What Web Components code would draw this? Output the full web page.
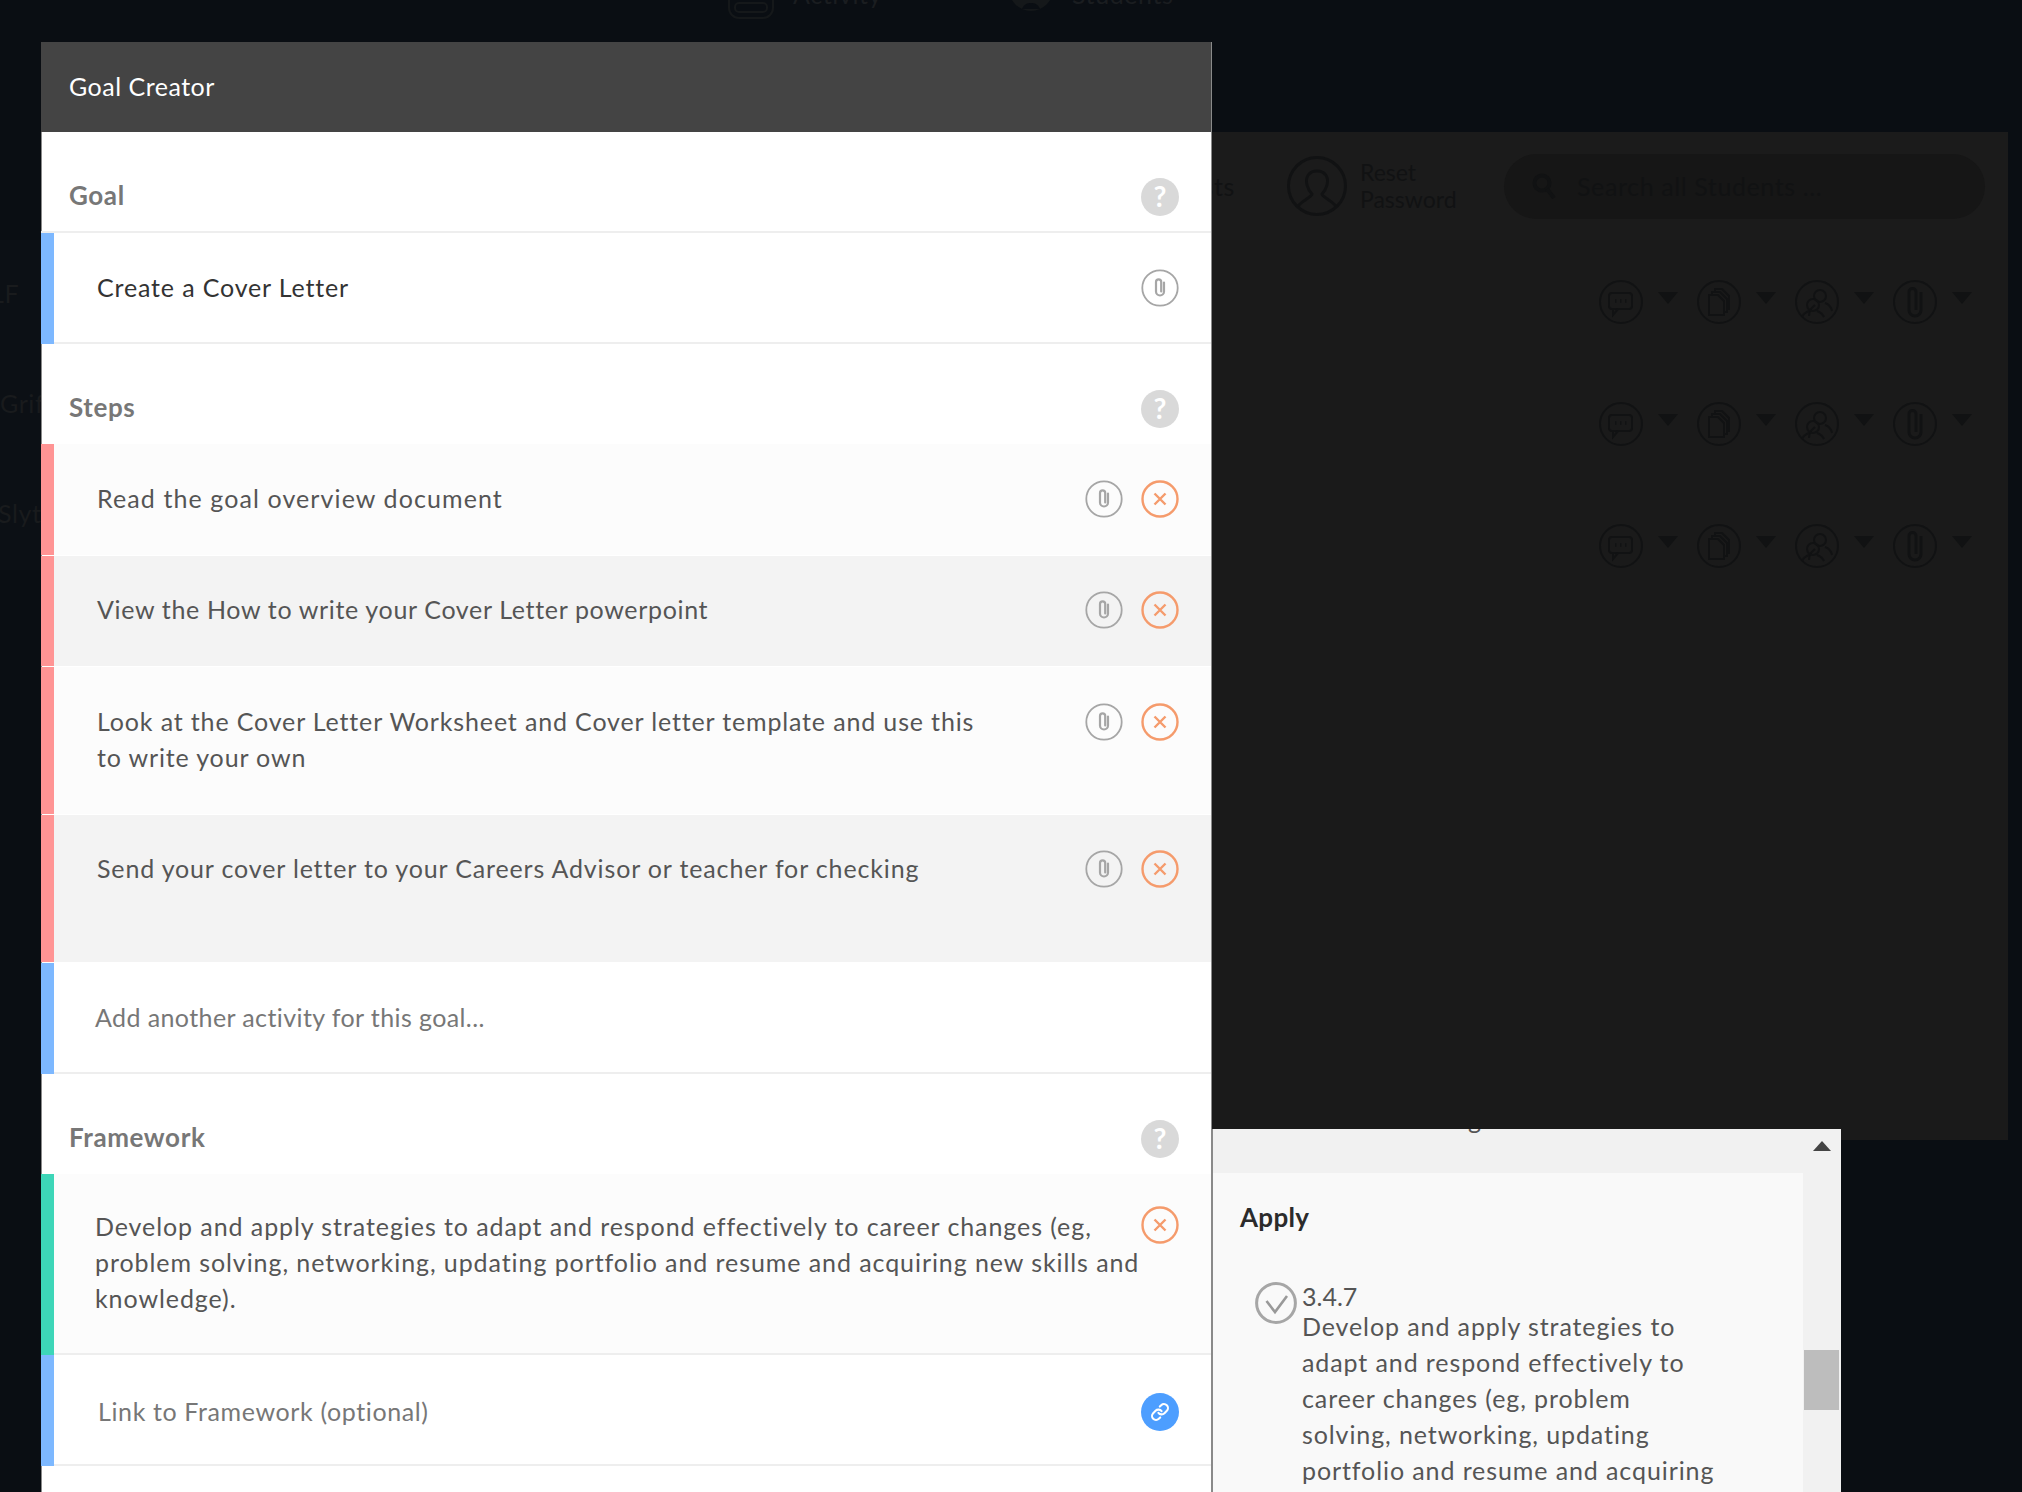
<!DOCTYPE html>
<html lang="en">
<head>
<meta charset="utf-8">
<title>Goal Creator</title>
<style>
  html, body { margin: 0; height: 100%; }
  body { position: relative; width: 2022px; height: 1492px; overflow: hidden; background: #0a0e13; font-family: Lato, "Open Sans", sans-serif; }
</style>
</head>
<body>
<page-backdrop></page-backdrop>

<goal-modal heading="Goal Creator">
  <modal-section label="Goal" ruled></modal-section>
  <goal-row bar="#7db8ff" tone="white" ink="#333" clip ruled>Create a Cover Letter</goal-row>
  <modal-section label="Steps"></modal-section>
  <goal-row bar="#ff9494" tone="light" clip remove track="1.1px">Read the goal overview document</goal-row>
  <goal-row bar="#ff9494" tone="grey" clip remove track=".66px">View the How to write your Cover Letter powerpoint</goal-row>
  <goal-row bar="#ff9494" tone="light" clip remove lines="2">Look at the Cover Letter Worksheet and Cover letter template and use this<br>to write your own</goal-row>
  <goal-row bar="#ff9494" tone="grey" clip remove lines="2" extra="1px">Send your cover letter to your Careers Advisor or teacher for checking</goal-row>
  <goal-row bar="#7db8ff" tone="white" ink="#777" ruled inset="95px" track=".4px" pad="36px">Add another activity for this goal...</goal-row>
  <modal-section label="Framework"></modal-section>
  <goal-row bar="#3dd6b8" tone="light" remove ruled inset="95px" wide track=".92px" pad="34px">Develop and apply strategies to adapt and respond effectively to career changes (eg,<br>problem solving, networking, updating portfolio and resume and acquiring new skills and<br>knowledge).</goal-row>
  <goal-row bar="#7db8ff" tone="white" ink="#777" link ruled inset="98px" track=".62px" pad="38px">Link to Framework (optional)</goal-row>
</goal-modal>

<framework-popup></framework-popup>

<script>
const DIM = '#111213';

// every round button in the modal is one of these
const ROUND_ICONS = {
  help: `<circle cx="19" cy="19" r="19" fill="#d9d9d9"/>
    <text x="19" y="29" text-anchor="middle" font-family="Lato, sans-serif" font-size="28" font-weight="700" fill="#fff">?</text>`,
  clip: `<circle cx="19" cy="19" r="17.7" fill="none" stroke="#a6a6a6" stroke-width="1.8"/>
    <path d="M23 13.5V22.5a4 4 0 0 1-8 0V13a2.6 2.6 0 0 1 5.2 0V22.5" fill="none" stroke="#a6a6a6" stroke-width="2.2" stroke-linecap="round"/>`,
  remove: `<circle cx="19" cy="19" r="17.5" fill="none" stroke="#f59b6c" stroke-width="2.4"/>
    <path d="M13.5 13.5l11 11M24.5 13.5l-11 11" fill="none" stroke="#f59b6c" stroke-width="2.4"/>`,
  link: `<circle cx="19" cy="19" r="19" fill="#4d9eff"/>
    <g transform="translate(9.4 9.4) scale(.8)" fill="none" stroke="#fff" stroke-width="2.6" stroke-linecap="round" stroke-linejoin="round">
      <path d="M10 13a5 5 0 0 0 7.54.54l3-3a5 5 0 0 0-7.07-7.07l-1.72 1.71"/>
      <path d="M14 11a5 5 0 0 0-7.54-.54l-3 3a5 5 0 0 0 7.07 7.07l1.71-1.71"/>
    </g>`,
  check: `<circle cx="21" cy="21" r="19.4" fill="none" stroke="#a6a6a6" stroke-width="3"/>
    <path d="M11.5 19L20 30l12-16" fill="none" stroke="#999" stroke-width="2.6"/>`
};

class RoundIcon extends HTMLElement {
  constructor() {
    super();
    this.attachShadow({ mode: 'open' });
    const type = this.getAttribute('type') || 'clip';
    const size = type === 'check' ? 42 : 38;
    this.shadowRoot.innerHTML = `
      <style>
        :host { display: block; width: ${size}px; height: ${size}px; flex: none; }
        svg { display: block; }
      </style>
      <svg width="${size}" height="${size}" viewBox="0 0 ${size} ${size}">${ROUND_ICONS[type]}</svg>`;
  }
}

class GoalModal extends HTMLElement {
  constructor() {
    super();
    this.attachShadow({ mode: 'open' });
    this.shadowRoot.innerHTML = `
      <style>
        :host {
          position: absolute; left: 41px; top: 42px; bottom: 0; width: 1171px;
          display: flex; flex-direction: column; box-sizing: border-box;
          background: #fff; border-right: 1px solid #8a8a8a; box-shadow: inset 1px 0 0 #8a8a8a;
          overflow: hidden;
        }
        header {
          height: 90px; flex: none; display: flex; align-items: center; padding: 0 0 2px 28px; box-sizing: border-box;
          background: #444; color: #fff; font-size: 25px; letter-spacing: .5px;
        }
      </style>
      <header>${this.getAttribute('heading')}</header>
      <slot></slot>`;
  }
}

class ModalSection extends HTMLElement {
  constructor() {
    super();
    this.attachShadow({ mode: 'open' });
    const ruled = this.hasAttribute('ruled');
    this.shadowRoot.innerHTML = `
      <style>
        :host {
          display: flex; align-items: center; justify-content: space-between; flex: none;
          box-sizing: border-box; height: ${ruled ? 101 : 100}px; padding: 46px 32px ${ruled ? 15 : 16}px 28px;
          ${ruled ? 'border-bottom: 2px solid #eee;' : ''}
        }
        span { color: #777; font-size: 26px; font-weight: 700; letter-spacing: .6px; position: relative; top: -2px; }
      </style>
      <span>${this.getAttribute('label')}</span>
      <round-icon type="help"></round-icon>`;
  }
}

class GoalRow extends HTMLElement {
  constructor() {
    super();
    this.attachShadow({ mode: 'open' });
    const a = (n, d) => this.getAttribute(n) || d;
    const tones = { white: '#fff', light: '#fcfcfc', grey: '#f3f3f3' };
    const ruled = this.hasAttribute('ruled');
    const wide = this.hasAttribute('wide');
    const lines = +a('lines', 1);
    let icons = '';
    if (this.hasAttribute('clip')) icons += '<round-icon type="clip"></round-icon>';
    if (this.hasAttribute('remove')) icons += '<round-icon type="remove"></round-icon>';
    if (this.hasAttribute('link')) icons += '<round-icon type="link"></round-icon>';
    // single line rows come out 111.5px tall, the ruled ones 111px with their rule
    this.shadowRoot.innerHTML = `
      <style>
        :host {
          display: flex; flex: none; box-sizing: border-box; background: ${tones[a('tone', 'white')]};
          ${ruled ? 'border-bottom: 2px solid #eee;' : 'margin-bottom: 1px;'}
        }
        .bar { width: 13px; flex: none; background: ${a('bar', '#7db8ff')}; ${ruled ? 'margin-bottom: -2px;' : ''} }
        .text {
          flex: 1; min-width: 0; box-sizing: border-box;
          padding: ${a('pad', '35.5px')} 0 ${wide ? '37px' : '0'} calc(${a('inset', '97px')} - 54px);
          min-height: calc(36px * ${lines} + ${ruled ? 73 : 74.5}px + ${a('extra', '0px')});
          color: ${a('ink', '#555')}; font-size: 25px; line-height: 36px;
          letter-spacing: ${a('track', '.85px')}; white-space: nowrap;
        }
        .icons { flex: none; display: flex; gap: 18px; padding: ${a('pad', '35.5px')} 32px 0 0; }
        :host([wide]) .icons { padding-top: 32px; position: absolute; right: 0; }
      </style>
      <div class="bar"></div>
      <div class="text"><slot></slot></div>
      <div class="icons">${icons}</div>`;
  }
}

class FrameworkPopup extends HTMLElement {
  constructor() {
    super();
    this.attachShadow({ mode: 'open' });
    this.shadowRoot.innerHTML = `
      <style>
        :host {
          position: absolute; left: 1212px; top: 1129px; bottom: 0; width: 629px;
          display: flex; box-sizing: border-box; overflow: hidden;
          border-left: 1px solid #8a8a8a; background: #f1f1f1;
        }
        .scroll { flex: 1; min-width: 0; display: flex; flex-direction: column; }
        .above { height: 44px; flex: none; overflow: hidden; padding-left: 255px; color: #555; font-size: 25px; line-height: 36px; }
        .above span { display: block; margin-top: -28px; }
        .group { flex: 1; background: #f9f9f9; padding: 26px 0 0 27px; }
        h3 { margin: 0 0 47px; font-size: 26px; line-height: 36px; font-weight: 700; color: #2b2b2b; letter-spacing: .3px; }
        .item { display: flex; margin-left: 15px; gap: 5px; }
        .num { color: #555; font-size: 25px; line-height: 24px; padding-top: 2px; }
        .desc { color: #555; font-size: 25px; line-height: 36px; letter-spacing: .9px; white-space: nowrap; }
        .rail { width: 38px; flex: none; position: relative; background: #f1f1f1; }
        .arrow { margin: 12px auto 0; width: 0; height: 0; border: 9px solid transparent; border-top: 0; border-bottom: 10px solid #444; }
        .thumb { position: absolute; left: 1px; right: 2px; top: 221px; height: 60px; background: #bdbdbd; }
      </style>
      <div class="scroll">
        <div class="above"><span>g</span></div>
        <div class="group">
          <h3>Apply</h3>
          <div class="item">
            <round-icon type="check"></round-icon>
            <div>
              <div class="num">3.4.7</div>
              <div class="desc">Develop and apply strategies to<br>adapt and respond effectively to<br>career changes (eg, problem<br>solving, networking, updating<br>portfolio and resume and acquiring</div>
            </div>
          </div>
        </div>
      </div>
      <div class="rail"><div class="arrow"></div><div class="thumb"></div></div>`;
  }
}

// faint icons of the page that sits behind the overlay
const DIM_ICONS = {
  chat: `<rect x="10" y="13" width="23" height="16" rx="3"/><path d="M14 29v6l5-6"/><path d="M16 21h1.5M21 21h1.5M26 21h1.5" stroke-width="3.5"/>`,
  docs: `<path d="M12 15v20h15V21l-6-6zM15 15v-3h8l7 7v13h-3M18 12V9h7l7 7v13h-2"/>`,
  users: `<circle cx="25" cy="16" r="6"/><path d="M14 36c0-7 4-9 6-11M30 23c3 1 6 3 7 8"/><circle cx="18" cy="25" r="6"/><path d="M7 37c2-4 4-5 7-6M22 31c3 1 5 2 7 6"/>`,
  clip: `<path d="M28 12v18a6 6 0 0 1-12 0V12a3.5 3.5 0 0 1 7 0v18" stroke-width="3"/>`
};

class DimIcon extends HTMLElement {
  constructor() {
    super();
    this.attachShadow({ mode: 'open' });
    this.shadowRoot.innerHTML = `
      <style>
        :host { display: flex; align-items: flex-start; flex: none; gap: 15px; width: 98px; }
        svg { display: block; flex: none; }
        .tri { width: 0; height: 0; margin-top: 12px; border: 10px solid transparent; border-bottom: 0; border-top: 12px solid ${DIM}; }
      </style>
      <svg width="44" height="44" viewBox="0 0 44 44" fill="none" stroke="${DIM}" stroke-width="2">
        <circle cx="22" cy="22" r="21"/>${DIM_ICONS[this.getAttribute('type')]}
      </svg>
      <div class="tri"></div>`;
  }
}

class PageBackdrop extends HTMLElement {
  constructor() {
    super();
    this.attachShadow({ mode: 'open' });
    const row = `<div class="row"><dim-icon type="chat"></dim-icon><dim-icon type="docs"></dim-icon><dim-icon type="users"></dim-icon><dim-icon type="clip"></dim-icon></div>`;
    this.shadowRoot.innerHTML = `
      <style>
        :host { display: block; height: 1492px; color: #1a1d20; font-size: 25px; letter-spacing: .6px; overflow: hidden; }
        .top { height: 132px; display: flex; padding-left: 728px; box-sizing: border-box; }
        .top svg { display: block; margin-top: -41px; flex: none; }
        .top span { margin: -24px 0 0 19px; width: 216px; line-height: 36px; }
        .main { display: flex; }
        .names { width: 1211px; flex: none; padding-top: 108px; }
        .names div { height: 110px; box-sizing: border-box; background: #0c1015; padding-top: 35px; line-height: 36px; color: #191b1d; overflow: hidden; white-space: nowrap; }
        .panel { width: 797px; height: 1008px; background: #1a1a1a; flex: none; color: ${DIM}; }
        .band { height: 108px; display: flex; align-items: center; justify-content: flex-end; padding-right: 23px; box-sizing: border-box; background: #1b1b1b; }
        .band > * { flex: none; }
        .lists { margin-right: 52px; }
        .reset { line-height: 27px; margin: 0 48px 0 13px; width: 96px; font-size: 23px; letter-spacing: 0; white-space: normal; }
        .search { width: 481px; height: 65px; border-radius: 33px; background: #161616; display: flex; align-items: center; gap: 21px; padding-left: 28px; box-sizing: border-box; }
        .row { height: 122px; display: flex; padding: 40px 0 0 388px; box-sizing: border-box; }
      </style>
      <div class="top">
        <svg width="46" height="60" viewBox="0 0 46 60" fill="none" stroke="#15181a" stroke-width="2"><rect x="1" y="1" width="44" height="58" rx="10"/><rect x="7" y="44" width="32" height="9" rx="4"/></svg>
        <span>Activity</span>
        <svg width="44" height="60" viewBox="0 0 44 60" fill="#15181a"><circle cx="22" cy="30" r="22" fill="#15181a"/><path d="M13 50c2-5 5-6 9-6s7 1 9 6z" fill="#0a0e13"/></svg>
        <span>Students</span>
      </div>
      <div class="main">
        <div class="names">
          <div style="margin-left:-24px">ELF</div>
          <div>Griffin</div>
          <div style="margin-left:-2px">Slytherin</div>
        </div>
        <div class="panel">
          <div class="band">
            <span class="lists">Lists</span>
            <svg width="60" height="62" viewBox="0 0 60 62" fill="none" stroke="${DIM}" stroke-width="3"><circle cx="30" cy="31" r="28.5"/><path d="M30 16c-8 0-12 6-10 14 1 4 3 7 5 9 0 3-8 5-14 12M30 16c8 0 12 6 10 14-1 4-3 7-5 9 0 3 8 5 14 12"/></svg>
            <span class="reset">Reset Password</span>
            <div class="search">
              <svg width="24" height="26" viewBox="0 0 24 26" fill="none" stroke="${DIM}" stroke-width="4"><circle cx="10" cy="10" r="7.5"/><path d="M15 16l7 9"/></svg>
              <span>Search all Students ...</span>
            </div>
          </div>
          ${row}${row}${row}
        </div>
      </div>`;
  }
}

customElements.define('round-icon', RoundIcon);
customElements.define('goal-modal', GoalModal);
customElements.define('modal-section', ModalSection);
customElements.define('goal-row', GoalRow);
customElements.define('framework-popup', FrameworkPopup);
customElements.define('dim-icon', DimIcon);
customElements.define('page-backdrop', PageBackdrop);
</script>
</body>
</html>
